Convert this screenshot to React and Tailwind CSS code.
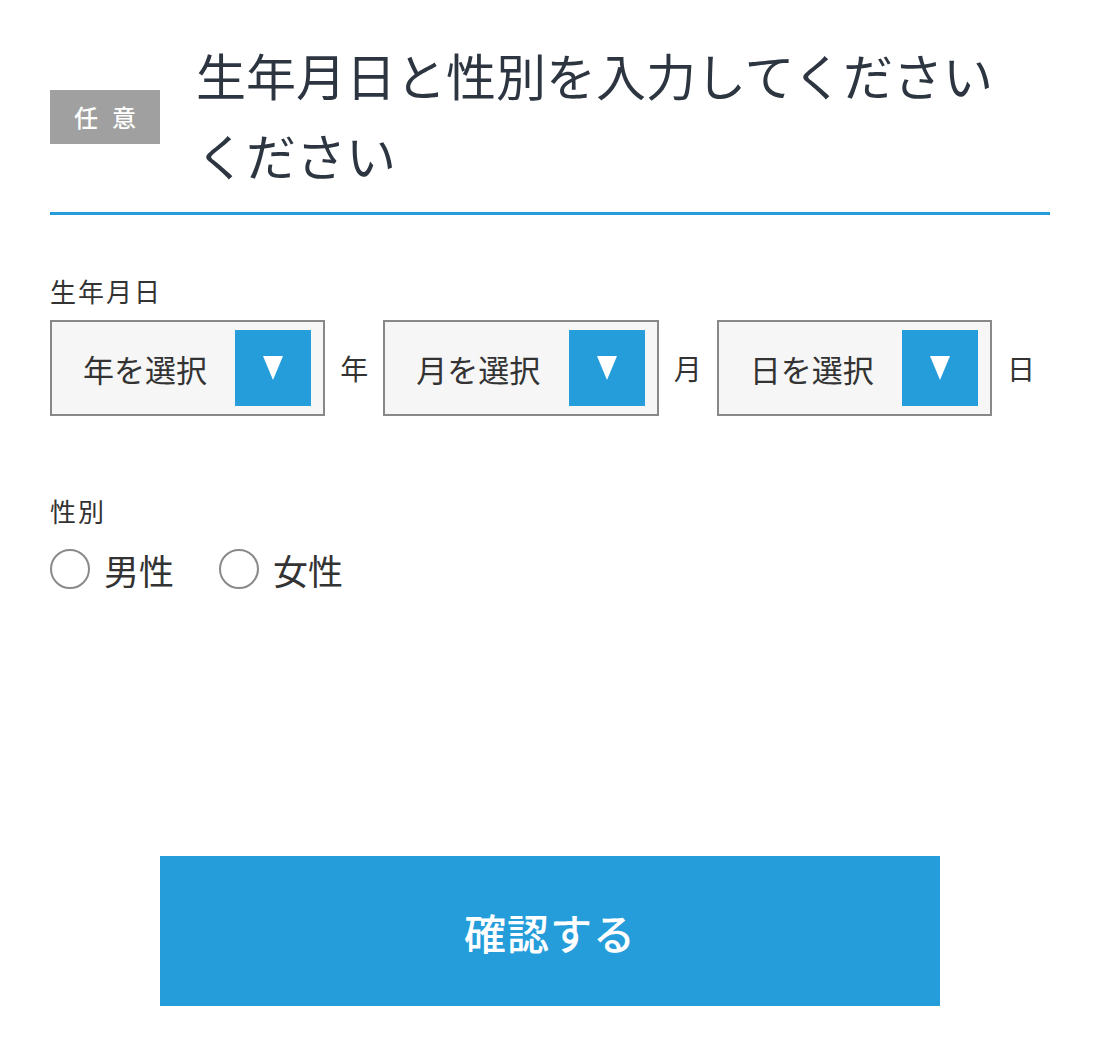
import { useState } from "react";

const font = { fontFamily: '"Noto Sans CJK JP", "Noto Sans", sans-serif' };

function SelectBox({ label }) {
  return (
    <div className="flex items-center w-[276px] h-[96px] border-2 border-[#888888] bg-[#f6f6f6] pl-[31px] pr-[12px]">
      <span className="text-[31px] leading-none text-[#333333]">{label}</span>
      <div className="ml-auto w-[76px] h-[76px] bg-[#259ddb] flex items-center justify-center">
        <svg width="20" height="24" viewBox="0 0 20 24">
          <polygon points="0,0 20,0 10,24" fill="#ffffff" />
        </svg>
      </div>
    </div>
  );
}

function Radio({ label, checked, onClick }) {
  return (
    <label className="flex items-center gap-[14px] cursor-pointer" onClick={onClick}>
      <span className="w-[40px] h-[40px] rounded-full border-2 border-[#8a8a8a] bg-white flex items-center justify-center">
        {checked && <span className="w-[20px] h-[20px] rounded-full bg-[#259ddb]"></span>}
      </span>
      <span className="text-[35px] leading-none text-[#333333]">{label}</span>
    </label>
  );
}

export default function App() {
  const [gender, setGender] = useState(null);

  return (
    <div className="min-h-screen bg-white px-[50px] pt-[34px]" style={font}>
      {/* Header */}
      <div className="flex items-center border-b-[3px] border-[#259ddb] pb-[18px]">
        <div className="w-[110px] h-[54px] mt-[6px] bg-[#a0a0a0] flex items-center justify-center gap-[14px] text-white text-[24px] font-medium leading-none">
          <span>任</span>
          <span>意</span>
        </div>
        <h2 className="flex-1 ml-[36px] pr-[20px] text-[50px] leading-[80px] font-normal text-[#2c3540]">
          生年月日と性別を入力してくださいください
        </h2>
      </div>

      {/* Birthday */}
      <div className="mt-[58px]">
        <p className="text-[26px] leading-[36px] tracking-[2px] text-[#333333] mb-[11px]">生年月日</p>
        <div className="flex items-center">
          <SelectBox label="年を選択" />
          <span className="mx-[15px] text-[28px] leading-none text-[#333333]">年</span>
          <SelectBox label="月を選択" />
          <span className="mx-[15px] text-[28px] leading-none text-[#333333]">月</span>
          <SelectBox label="日を選択" />
          <span className="mx-[15px] text-[28px] leading-none text-[#333333]">日</span>
        </div>
      </div>

      {/* Gender */}
      <div className="mt-[77px]">
        <p className="text-[26px] leading-[36px] tracking-[2px] text-[#333333] mb-[20px]">性別</p>
        <div className="flex items-center gap-[45px]">
          <Radio label="男性" checked={gender === "m"} onClick={() => setGender("m")} />
          <Radio label="女性" checked={gender === "f"} onClick={() => setGender("f")} />
        </div>
      </div>

      {/* Submit */}
      <button className="block mx-auto mt-[267px] w-[780px] h-[150px] bg-[#259ddb] text-white text-[42px] tracking-[1px] font-medium">
        確認する
      </button>
    </div>
  );
}
